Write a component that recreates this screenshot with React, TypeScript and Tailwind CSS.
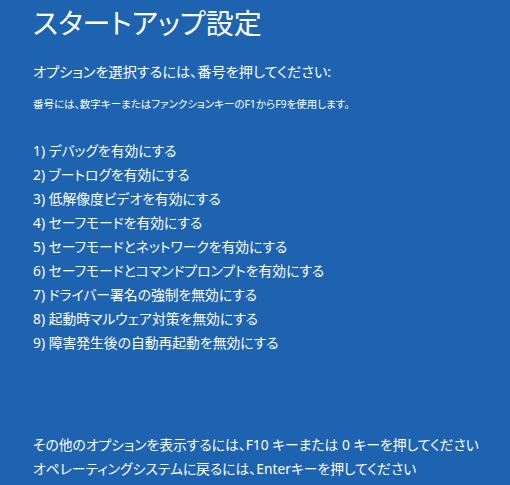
const items = [
  'デバッグを有効にする',
  'ブートログを有効にする',
  '低解像度ビデオを有効にする',
  'セーフモードを有効にする',
  'セーフモードとネットワークを有効にする',
  'セーフモードとコマンドプロンプトを有効にする',
  'ドライバー署名の強制を無効にする',
  '起動時マルウェア対策を無効にする',
  '障害発生後の自動再起動を無効にする',
]

export default function App() {
  return (
    <div
      className="flex h-screen flex-col overflow-hidden bg-[#1e63b0] pl-[33px] pb-[4px] pt-[5px] text-white [font-feature-settings:'palt']"
      style={{ fontFamily: '"Noto Sans", "Noto Sans CJK JP", sans-serif' }}
    >
      <h1 className="text-[28px] leading-[36px] font-normal">スタートアップ設定</h1>

      <p className="mt-[19px] text-[14.2px] leading-[24px]">オプションを選択するには、番号を押してください:</p>
      <p className="mt-[12px] text-[10.5px] leading-[16px]">
        番号には、数字キーまたはファンクションキーのF1からF9を使用します。
      </p>

      <ol className="mt-[27px] text-[13.8px] leading-[24px]">
        {items.map((t, i) => (
          <li key={t}>
            {i + 1}) {t}
          </li>
        ))}
      </ol>

      <div className="mt-auto text-[13.8px] leading-[24px]">
        <p>その他のオプションを表示するには、F10 キーまたは 0 キーを押してください</p>
        <p>オペレーティングシステムに戻るには、Enterキーを押してください</p>
      </div>
    </div>
  )
}
